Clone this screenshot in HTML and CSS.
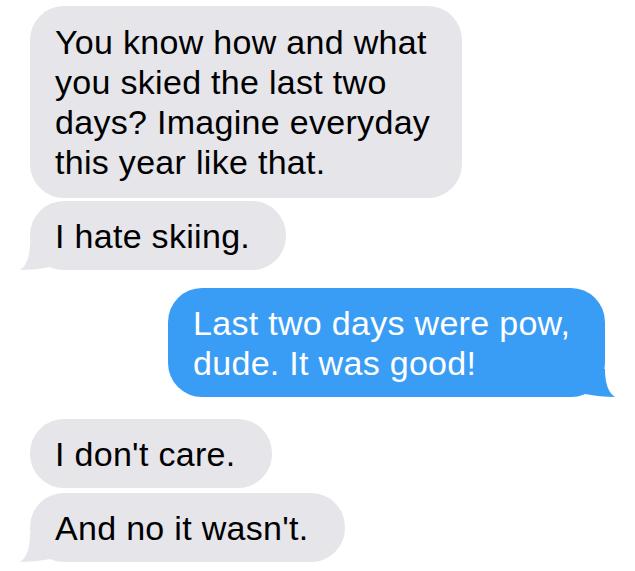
FILE: index.html
```html
<!DOCTYPE html>
<html>
<head>
<meta charset="utf-8">
<link rel="stylesheet" href="styles.css">
</head>
<body>
<div class="thread">
  <div class="group">
    <div class="bubble them w1">You know how and what<br>you skied the last two<br>days? Imagine everyday<br>this year like that.</div>
    <div class="bubble them tail">I hate skiing.</div>
  </div>
  <div class="group me-group">
    <div class="bubble me tail w2">Last two days were pow,<br>dude. It was good!</div>
  </div>
  <div class="group last">
    <div class="bubble them">I don't care.</div>
    <div class="bubble them tail">And no it wasn't.</div>
  </div>
</div>
</body>
</html>
```
FILE: styles.css
```css
html, body {
  margin: 0;
  padding: 0;
  background: #ffffff;
}
.thread {
  display: flex;
  flex-direction: column;
  padding: 6px 30px 0 30px;
  font-family: "Liberation Sans", Arial, sans-serif;
  font-size: 34px;
  line-height: 40px;
  letter-spacing: 0.3px;
}
.group {
  display: flex;
  flex-direction: column;
  align-items: flex-start;
  gap: 3px;
}
.me-group {
  align-items: flex-end;
  margin-top: 18px;
}
.group.last {
  margin-top: 22px;
  gap: 5px;
}
.bubble {
  position: relative;
  box-sizing: border-box;
  padding: 15px 36px 14px 25px;
  border-radius: 34px;
  white-space: nowrap;
}
.them {
  background: #e5e5ea;
  color: #000;
}
.me {
  background: #399df6;
  color: #fff;
}
.w1 {
  width: 432px;
  padding-top: 16px;
  padding-bottom: 16px;
}
.w2 {
  width: 437px;
}
.them.tail::before {
  content: "";
  position: absolute;
  left: -14px;
  bottom: 0;
  width: 34px;
  height: 28px;
  background: #e5e5ea;
  clip-path: path("M 14 0 L 34 0 L 34 25 C 24 27, 14 28, 4 28 C 10 24, 14 16, 14 0 Z");
}
.me.tail::before {
  content: "";
  position: absolute;
  right: -14px;
  bottom: 0;
  width: 34px;
  height: 28px;
  background: #399df6;
  clip-path: path("M 20 0 L 0 0 L 0 25 C 10 27, 20 28, 30 28 C 24 24, 20 16, 20 0 Z");
}
```
